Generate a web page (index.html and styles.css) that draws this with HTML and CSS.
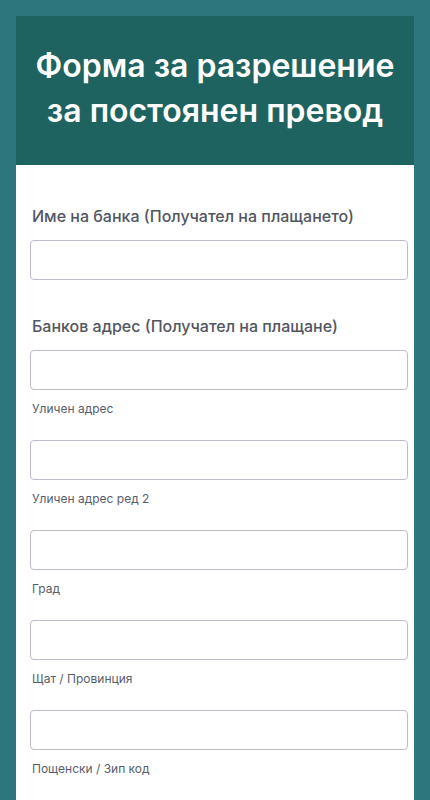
FILE: index.html
```html
<!DOCTYPE html>
<html lang="bg">
<head>
  <meta charset="UTF-8">
  <meta name="viewport" content="width=device-width, initial-scale=1">
  <title>Форма за разрешение за постоянен превод</title>
  <link rel="stylesheet" href="styles.css">
</head>
<body>
  <div class="form-card">
    <header class="form-header">
      <h1>Форма за разрешение за постоянен превод</h1>
    </header>

    <main class="form-body">
      <div class="field">
        <label class="field-label" for="bankName">Име на банка (Получател на плащането)</label>
        <input type="text" id="bankName" class="text-input">
      </div>

      <div class="field">
        <label class="field-label" for="street1">Банков адрес (Получател на плащане)</label>
        <div class="address-row">
          <input type="text" id="street1" class="text-input">
          <span class="sublabel">Уличен адрес</span>
        </div>
        <div class="address-row">
          <input type="text" id="street2" class="text-input">
          <span class="sublabel">Уличен адрес ред 2</span>
        </div>
        <div class="address-row">
          <input type="text" id="city" class="text-input">
          <span class="sublabel">Град</span>
        </div>
        <div class="address-row">
          <input type="text" id="state" class="text-input">
          <span class="sublabel">Щат / Провинция</span>
        </div>
        <div class="address-row">
          <input type="text" id="zip" class="text-input">
          <span class="sublabel">Пощенски / Зип код</span>
        </div>
      </div>
    </main>
  </div>
</body>
</html>
```

FILE: styles.css
```css
:root {
  --page-bg: #2e767e;
  --header-bg: #1f6360;
  --label-color: #52565f;
  --sublabel-color: #575d6b;
  --input-border: #b8bdc9;
}

body {
  font-family: Inter, 'Noto Sans', sans-serif;
  background: var(--page-bg);
  margin: 0;
  padding: 16px 16px 0;
}

.form-card {
  background: #fff;
  min-height: 784px;
}

.form-header {
  background: var(--header-bg);
  padding: 27px 12px 32px;
  text-align: center;
}

.form-header h1 {
  margin: 0;
  color: #fff;
  font-size: 32px;
  font-weight: 600;
  line-height: 45px;
}

.form-body {
  padding: 39px 6px 0 14px;
}

.field {
  display: flex;
  flex-direction: column;
  margin-bottom: 34px;
}

.field-label {
  color: var(--label-color);
  font-size: 16px;
  font-weight: 500;
  line-height: 24px;
  padding-left: 2px;
  margin-bottom: 12px;
}

.text-input {
  box-sizing: border-box;
  width: 100%;
  height: 40px;
  margin: 0;
  border: 1px solid var(--input-border);
  border-radius: 4px;
  background: #fff;
  font: inherit;
}

.address-row {
  display: flex;
  flex-direction: column;
  margin-bottom: 22px;
}

.sublabel {
  color: var(--sublabel-color);
  font-size: 12px;
  line-height: 18px;
  margin-top: 10px;
  padding-left: 2px;
}
```
